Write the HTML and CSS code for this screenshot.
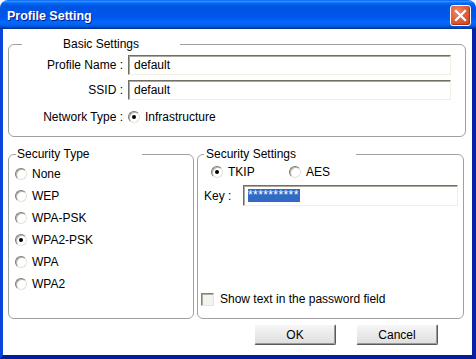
FILE: index.html
```html
<!DOCTYPE html>
<html lang="en">
<head>
    <meta charset="UTF-8">
    <title>Profile Setting</title>
    <link rel="stylesheet" href="styles.css">
</head>
<body>

    <div class="window">

        <!-- Title bar -->
        <div class="titlebar">
            <span class="title">Profile Setting</span>
            <button class="close" aria-label="Close">
                <svg width="13" height="13" viewBox="0 0 13 13">
                    <path d="M2 2 L11 11 M11 2 L2 11" stroke="#fff" stroke-width="2.2" stroke-linecap="square"/>
                </svg>
            </button>
        </div>

        <div class="frame">

            <!-- Basic settings -->
            <fieldset class="group basic">
                <legend><span class="legend-text">Basic Settings</span></legend>
                <div class="basic-grid">
                    <label class="row-label">Profile Name :</label>
                    <div class="field">default</div>
                    <label class="row-label">SSID :</label>
                    <div class="field">default</div>
                    <label class="row-label net">Network Type :</label>
                    <div class="option net"><span class="radio on"></span>Infrastructure</div>
                </div>
            </fieldset>

            <div class="groups">

                <!-- Security type -->
                <fieldset class="group sectype">
                    <legend>Security Type</legend>
                    <div class="type-list">
                        <div class="option"><span class="radio"></span>None</div>
                        <div class="option"><span class="radio"></span>WEP</div>
                        <div class="option"><span class="radio"></span>WPA-PSK</div>
                        <div class="option"><span class="radio on"></span>WPA2-PSK</div>
                        <div class="option"><span class="radio"></span>WPA</div>
                        <div class="option"><span class="radio"></span>WPA2</div>
                    </div>
                </fieldset>

                <!-- Security settings -->
                <fieldset class="group secset">
                    <legend>Security Settings</legend>
                    <div class="sec-body">
                        <div class="cipher-row">
                            <div class="option tkip"><span class="radio on"></span>TKIP</div>
                            <div class="option"><span class="radio"></span>AES</div>
                        </div>
                        <div class="key-row">
                            <label class="key-label">Key :</label>
                            <div class="field key"><span class="sel">**********</span></div>
                        </div>
                        <div class="check-row">
                            <span class="checkbox"></span>Show text in the password field
                        </div>
                    </div>
                </fieldset>

            </div>

            <div class="actions">
                <button class="btn">OK</button>
                <button class="btn">Cancel</button>
            </div>

        </div>
    </div>

</body>
</html>
```

FILE: styles.css
```css
body, html {
    margin: 0;
    padding: 0;
    background: #fff;
    font-family: "Liberation Sans", Arial, sans-serif;
    font-size: 12px;
    color: #000;
}

.window {
    width: 476px;
    height: 359px;
    display: flex;
    flex-direction: column;
}

/* Title bar */
.titlebar {
    height: 29px;
    flex: none;
    display: flex;
    align-items: center;
    justify-content: space-between;
    padding: 1px 5px 0 7px;
    box-sizing: border-box;
    border-radius: 8px 8px 0 0;
    background: linear-gradient(to bottom,
        #0058ee 0%, #3593ff 4%, #288eff 6%, #127dff 8%, #036ffc 10%,
        #0262ee 14%, #0057e5 20%, #0054e3 24%, #0055eb 56%, #005bf5 66%,
        #026afe 76%, #0062ef 86%, #0052d6 92%, #0040ab 96%, #003092 100%);
}

.title {
    color: #fff;
    font-weight: bold;
    font-size: 12.5px;
    text-shadow: 1px 1px #0a1883;
    padding-top: 2px;
}

.close {
    width: 21px;
    height: 21px;
    padding: 0;
    margin-top: 1px;
    border: 1px solid #fff;
    border-radius: 3px;
    display: flex;
    align-items: center;
    justify-content: center;
    background: radial-gradient(circle at 35% 30%, #ee8b6a 0%, #e2603d 45%, #c8431d 100%);
    box-shadow: inset -1px -1px 1px rgba(120, 20, 0, 0.5);
}

/* Window body */
.frame {
    flex: 1;
    display: flex;
    flex-direction: column;
    background: #fff;
    border-style: solid;
    border-width: 0 4px 4px 3px;
    border-color: #0831d9 #0620a8 #001d9a #0a45e0;
    padding: 8px 6px 10px 5px;
    box-sizing: border-box;
    min-height: 0;
}

/* Group boxes */
.group {
    margin: 0;
    padding: 0;
    min-width: 0;
    box-sizing: border-box;
    border: 1px solid #a0a0a0;
    border-radius: 6px;
}

.group legend {
    padding: 0;
    line-height: 14px;
    height: 14px;
}

.basic {
    height: 100px;
    width: 458px;
}

.basic legend {
    width: 158px;
    margin-left: 13px;
}

.legend-text {
    display: block;
    text-align: center;
}

.basic-grid {
    display: grid;
    grid-template-columns: 114px 323px;
    grid-auto-rows: 20px;
    column-gap: 5px;
    row-gap: 5px;
    padding-top: 4px;
    align-items: center;
}

.row-label {
    text-align: right;
}

.net {
    margin-top: 4px;
}

.field {
    height: 20px;
    box-sizing: border-box;
    background: #fff;
    border: 1px solid;
    border-color: #716f64 #f1efe2 #f1efe2 #716f64;
    box-shadow: inset 1px 1px #aca899;
    padding: 0 4px 0 5px;
    line-height: 19px;
    white-space: nowrap;
}

/* Radio and check */
.option {
    display: flex;
    align-items: center;
    gap: 5px;
}

.radio {
    width: 12px;
    height: 12px;
    box-sizing: border-box;
    border-radius: 50%;
    border: 1px solid;
    border-color: #7b7b75 #e4e2d8 #e4e2d8 #7b7b75;
    background: #fff;
    box-shadow: inset 1px 1px #b8b6ab;
    display: flex;
    align-items: center;
    justify-content: center;
    flex: none;
}

.radio.on::after {
    content: "";
    width: 4px;
    height: 4px;
    border-radius: 50%;
    background: #000;
}

.checkbox {
    width: 13px;
    height: 13px;
    box-sizing: border-box;
    border: 1px solid;
    border-color: #808080 #e8e6dc #e8e6dc #808080;
    box-shadow: inset 1px 1px #b0aea3;
    background: #f4f3ee;
    flex: none;
}

/* Lower groups */
.groups {
    display: flex;
    gap: 3px;
    height: 172px;
    margin-top: 10px;
}

.sectype {
    width: 186px;
}

.sectype legend {
    width: 125px;
    margin-left: 7px;
    padding-left: 1px;
}

.type-list {
    display: flex;
    flex-direction: column;
    padding: 2px 0 0 6px;
}

.type-list .option {
    height: 22px;
}

.secset {
    width: 267px;
}

.secset legend {
    width: 150px;
    margin-left: 6px;
    padding-left: 2px;
}

.sec-body {
    display: flex;
    flex-direction: column;
    height: 100%;
    box-sizing: border-box;
    padding: 0 0 8px 0;
}

.cipher-row {
    display: flex;
    height: 22px;
    padding-left: 13px;
}

.tkip {
    width: 78px;
}

.key-row {
    display: flex;
    align-items: center;
    margin-top: 2px;
    padding-left: 6px;
}

.key-label {
    width: 39px;
}

.field.key {
    width: 215px;
    height: 21px;
    padding-left: 4px;
    display: flex;
    align-items: center;
}

.sel {
    background: #316ac5;
    color: #fff;
    line-height: 13px;
    height: 13px;
    padding-right: 1px;
    letter-spacing: 0.4px;
}

.check-row {
    margin-top: auto;
    height: 22px;
    display: flex;
    align-items: center;
    gap: 6px;
    padding-left: 3px;
}

/* Buttons */
.actions {
    display: flex;
    justify-content: flex-end;
    gap: 20px;
    margin-top: 5px;
    padding-right: 28px;
}

.btn {
    width: 82px;
    height: 21px;
    padding: 0;
    font-family: "Liberation Sans", Arial, sans-serif;
    font-size: 12px;
    color: #000;
    border: 1px solid;
    border-color: #fff #5a5a5a #5a5a5a #fff;
    border-radius: 2px;
    background: linear-gradient(to bottom, #f6f6f6, #dedede);
    box-shadow: inset -1px -1px #9a9a9a;
}
```
